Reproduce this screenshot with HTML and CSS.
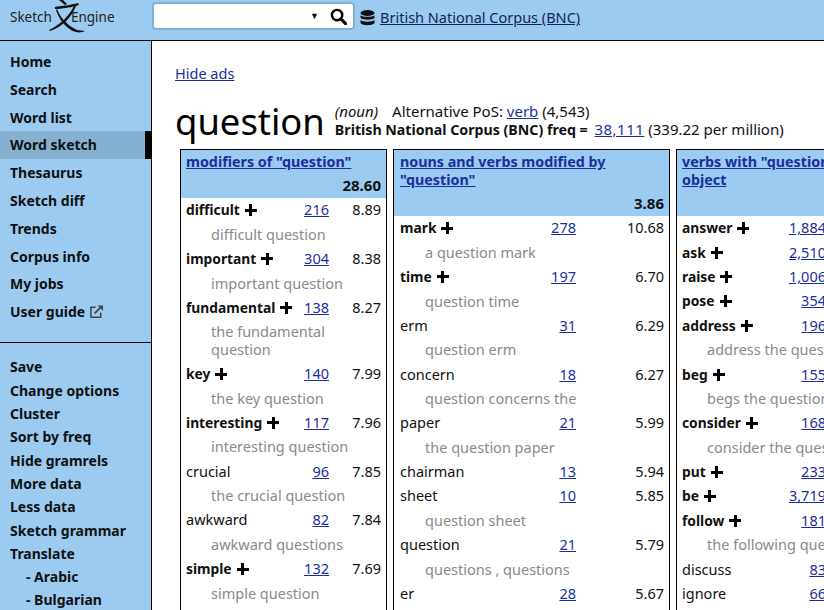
FILE: index.html
```html
<!DOCTYPE html>
<html lang="en">
<head>
<meta charset="utf-8">
<title>Word sketch</title>
<link rel="stylesheet" href="styles.css">
</head>
<body>
<header class="topbar">
  <div class="logo">
    <span>Sketch</span>
    <svg class="logo-mark" viewBox="0 0 36 34" width="36" height="34" aria-hidden="true">
      <path d="M10 0 L14 0 L18 4 L16 5Z" fill="#111"/>
      <path d="M6 7 C12 6 22 5 29 3 L30 5 C24 7 12 9 6 9Z" fill="#111"/>
      <path d="M8 9 C11 16 16 24 28 30 L36 31 C30 34 24 32 19 28 C13 23 9 16 7 10Z" fill="#111"/>
      <path d="M25 6 L27 6 C23 16 15 26 1 31 L0 30 C11 25 20 16 25 6Z" fill="#111"/>
    </svg>
    <span>Engine</span>
  </div>
  <div class="searchbox">
    <span class="caret">▼</span>
    <svg class="search-icon" viewBox="0 0 18 18" width="17" height="17" aria-hidden="true">
      <circle cx="7.5" cy="7.5" r="5.5" fill="none" stroke="#000" stroke-width="2.6"/>
      <path d="M11.5 11.5 L16.5 16.5" stroke="#000" stroke-width="3.2" stroke-linecap="round"/>
    </svg>
  </div>
  <svg class="db-icon" viewBox="0 0 14 16" width="15" height="16" aria-hidden="true">
    <ellipse cx="7" cy="3" rx="7" ry="3" fill="#111"/>
    <path d="M0 5.2 C2 7.4 12 7.4 14 5.2 V8 C12 10.2 2 10.2 0 8Z" fill="#111"/>
    <path d="M0 10 C2 12.2 12 12.2 14 10 V13 C12 16 2 16 0 13Z" fill="#111"/>
  </svg>
  <a class="corpus" href="#">British National Corpus (BNC)</a>
</header>
<div class="layout">
  <nav class="sidebar">
    <ul class="menu primary">
      <li>Home</li>
      <li>Search</li>
      <li>Word list</li>
      <li class="active">Word sketch</li>
      <li>Thesaurus</li>
      <li>Sketch diff</li>
      <li>Trends</li>
      <li>Corpus info</li>
      <li>My jobs</li>
      <li>User guide
        <svg class="ext" viewBox="0 0 16 16" width="15" height="15" aria-hidden="true">
          <path d="M7 3.5 H2 V14 H12.5 V9" fill="none" stroke="#444" stroke-width="1.6"/>
          <path d="M6 10 L13 3" stroke="#444" stroke-width="2"/>
          <path d="M9 1.5 H15 V7.5Z" fill="#444"/>
        </svg>
      </li>
    </ul>
    <ul class="menu secondary">
      <li>Save</li>
      <li>Change options</li>
      <li>Cluster</li>
      <li>Sort by freq</li>
      <li>Hide gramrels</li>
      <li>More data</li>
      <li>Less data</li>
      <li>Sketch grammar</li>
      <li>Translate</li>
      <li class="sub">- Arabic</li>
      <li class="sub">- Bulgarian</li>
    </ul>
  </nav>
  <main class="content">
    <a class="hide-ads" href="#">Hide ads</a>
    <div class="headword">
      <h1>question</h1>
      <div class="meta">
        <div><i>(noun)</i><span class="alt">Alternative PoS: <a href="#">verb</a> (4,543)</span></div>
        <div><b>British National Corpus (BNC) freq = </b><a class="freq" href="#">38,111</a> (339.22 per million)</div>
      </div>
    </div>
    <div class="columns">
      <section class="col col1">
        <div class="col-head"><a href="#">modifiers of "question"</a><div class="total">28.60</div></div>
        <div class="row"><b class="w">difficult<i class="p"></i></b><a href="#">216</a><span>8.89</span></div>
        <div class="ex">difficult question</div>
        <div class="row"><b class="w">important<i class="p"></i></b><a href="#">304</a><span>8.38</span></div>
        <div class="ex">important question</div>
        <div class="row"><b class="w">fundamental<i class="p"></i></b><a href="#">138</a><span>8.27</span></div>
        <div class="ex">the fundamental question</div>
        <div class="row"><b class="w">key<i class="p"></i></b><a href="#">140</a><span>7.99</span></div>
        <div class="ex">the key question</div>
        <div class="row"><b class="w">interesting<i class="p"></i></b><a href="#">117</a><span>7.96</span></div>
        <div class="ex">interesting question</div>
        <div class="row"><span class="w">crucial</span><a href="#">96</a><span>7.85</span></div>
        <div class="ex">the crucial question</div>
        <div class="row"><span class="w">awkward</span><a href="#">82</a><span>7.84</span></div>
        <div class="ex">awkward questions</div>
        <div class="row"><b class="w">simple<i class="p"></i></b><a href="#">132</a><span>7.69</span></div>
        <div class="ex">simple question</div>
      </section>
      <section class="col col2">
        <div class="col-head"><a href="#">nouns and verbs modified by "question"</a><div class="total">3.86</div></div>
        <div class="row"><b class="w">mark<i class="p"></i></b><a href="#">278</a><span>10.68</span></div>
        <div class="ex">a question mark</div>
        <div class="row"><b class="w">time<i class="p"></i></b><a href="#">197</a><span>6.70</span></div>
        <div class="ex">question time</div>
        <div class="row"><span class="w">erm</span><a href="#">31</a><span>6.29</span></div>
        <div class="ex">question erm</div>
        <div class="row"><span class="w">concern</span><a href="#">18</a><span>6.27</span></div>
        <div class="ex">question concerns the</div>
        <div class="row"><span class="w">paper</span><a href="#">21</a><span>5.99</span></div>
        <div class="ex">the question paper</div>
        <div class="row"><span class="w">chairman</span><a href="#">13</a><span>5.94</span></div>
        <div class="row"><span class="w">sheet</span><a href="#">10</a><span>5.85</span></div>
        <div class="ex">question sheet</div>
        <div class="row"><span class="w">question</span><a href="#">21</a><span>5.79</span></div>
        <div class="ex">questions , questions</div>
        <div class="row"><span class="w">er</span><a href="#">28</a><span>5.67</span></div>
      </section>
      <section class="col col3">
        <div class="col-head"><a href="#">verbs with "question" as object</a><div class="total"></div></div>
        <div class="row"><b class="w">answer<i class="p"></i></b><a href="#">1,884</a></div>
        <div class="row"><b class="w">ask<i class="p"></i></b><a href="#">2,510</a></div>
        <div class="row"><b class="w">raise<i class="p"></i></b><a href="#">1,006</a></div>
        <div class="row"><b class="w">pose<i class="p"></i></b><a href="#">354</a></div>
        <div class="row"><b class="w">address<i class="p"></i></b><a href="#">196</a></div>
        <div class="ex">address the question</div>
        <div class="row"><b class="w">beg<i class="p"></i></b><a href="#">155</a></div>
        <div class="ex">begs the question</div>
        <div class="row"><b class="w">consider<i class="p"></i></b><a href="#">168</a></div>
        <div class="ex">consider the question</div>
        <div class="row"><b class="w">put<i class="p"></i></b><a href="#">233</a></div>
        <div class="row"><b class="w">be<i class="p"></i></b><a href="#">3,719</a></div>
        <div class="row"><b class="w">follow<i class="p"></i></b><a href="#">181</a></div>
        <div class="ex">the following question</div>
        <div class="row"><span class="w">discuss</span><a href="#">83</a></div>
        <div class="row"><span class="w">ignore</span><a href="#">66</a></div>
      </section>
    </div>
  </main>
</div>
</body>
</html>
```
FILE: styles.css
```css
* { box-sizing: border-box; }
html, body { margin: 0; height: 100%; }
body { width: 824px; height: 610px; overflow: hidden; background: #fff; color: #111; font: 14.5px/24px "Noto Sans", sans-serif; }
a { color: #1a2f9c; }
ul { list-style: none; margin: 0; padding: 0; }
.topbar { height: 41px; background: #9bcbf0; border-bottom: 1px solid #000; display: flex; align-items: flex-start; }
.logo { width: 152px; height: 34px; flex: none; display: flex; align-items: center; padding-left: 10px; font-size: 13.5px; color: #222; }
.logo-mark { flex: none; margin: -1px -14px 0 -3px; }
.searchbox { width: 203px; height: 28px; margin-top: 2px; background: #fff; border: 2px solid #7fb0d8; border-radius: 4px; display: flex; align-items: center; justify-content: flex-end; gap: 11px; padding-right: 6px; }
.caret { font-size: 9px; line-height: 12px; }
.db-icon { margin: 10px 5px 0 5px; }
.corpus { line-height: 18px; margin-top: 8px; color: #14235f; }
.layout { display: flex; height: 569px; }
.sidebar { width: 152px; flex: none; background: #9bcbf0; border-right: 1px solid #000; }
.menu li { padding-left: 10px; font-size: 14px; font-weight: 700; color: #111; }
.primary { padding: 7px 0 16px; border-bottom: 1px solid #000; }
.primary li { height: 27.8px; line-height: 27.8px; }
.primary .active { background: #86b0d0; border-right: 6px solid #000; }
.secondary { padding-top: 12.5px; }
.secondary li { height: 23.3px; line-height: 23.3px; }
.menu .sub { padding-left: 26px; }
.ext { vertical-align: -2px; }
.content { flex: 1; padding: 20px 0 0 23px; min-width: 0; }
.hide-ads { display: block; height: 24px; margin-bottom: 15px; }
.headword { display: flex; height: 44px; margin-bottom: 5px; }
h1 { margin: -1px 10px 0 0; font-size: 36.4px; font-weight: 400; line-height: 44px; color: #000; }
.meta { line-height: 18px; margin-top: 2px; white-space: nowrap; font-size: 15px; }
.meta b { font-size: 14.2px; margin-right: 3px; }
.freq { letter-spacing: 0.5px; }
.alt { margin-left: 14px; }
.columns { display: flex; gap: 6px; align-items: flex-start; margin-left: 5px; }
.col { border: 1px solid #000; flex: none; height: 470px; border-bottom: 0; overflow: hidden; }
.col1 { width: 207px; }
.col2 { width: 277px; }
.col3 { width: 215px; }
.col-head { background: #9bcbf0; padding: 3px 5px 0; line-height: 18px; font-size: 14.3px; font-weight: 700; }
.col2 .col-head { padding-left: 6px; }
.total { text-align: right; font-size: 15px; font-weight: 700; height: 25px; line-height: 24px; margin-top: 2px; }
.row { display: flex; padding: 0 5px 2px; height: 24.4px; align-items: center; }
.row b { font-size: 13.8px; margin-top: 2px; }
.row .w { flex: 1; }
.row span:last-child { width: 52px; text-align: right; }
.col2 .row { padding-left: 6px; }
.col2 .row span:last-child { width: 88px; }
.col3 .row { padding-right: 64px; }
.ex { padding: 3.45px 0 3.45px 30px; color: #8a8a8a; line-height: 17.5px; }
.col2 .ex { padding-left: 31px; }
.p { display: inline-block; width: 12px; height: 12px; margin-left: 5px; vertical-align: -1px; background: linear-gradient(#000, #000) center / 3px 12px no-repeat, linear-gradient(#000, #000) center / 12px 3px no-repeat; }
```
